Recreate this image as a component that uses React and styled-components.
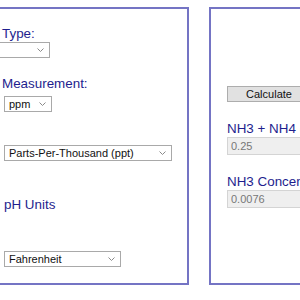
import React from 'react';
import styled, { createGlobalStyle } from 'styled-components';

const GlobalStyle = createGlobalStyle`
  html, body {
    margin: 0;
    padding: 0;
    background: #ffffff;
    overflow: hidden;
  }
  body {
    font-family: "Liberation Sans", Arial, sans-serif;
  }
`;

const Page = styled.div`
  display: flex;
  align-items: flex-start;
  gap: 20px;
  padding-top: 7px;
  margin-left: -40px;
  width: 560px;
`;

const Panel = styled.div`
  box-sizing: border-box;
  flex: 0 0 ${props => props.width}px;
  height: 278px;
  border: 2px solid #7474c4;
  padding-left: ${props => props.inset}px;
`;

const Label = styled.div`
  margin-top: ${props => props.top}px;
  margin-left: ${props => props.indent || 0}px;
  font-size: 13.4px;
  line-height: 15px;
  color: #1e1e8e;
  white-space: nowrap;
`;

const SelectWrap = styled.div`
  position: relative;
  margin-top: ${props => props.top}px;
  margin-left: ${props => props.shift || 2}px;
  width: ${props => props.width}px;
`;

const Select = styled.select`
  appearance: none;
  box-sizing: border-box;
  display: block;
  width: 100%;
  height: 16px;
  margin: 0;
  padding: 0 0 0 4px;
  border: 1px solid #a9a9a9;
  border-radius: 0;
  background: #ffffff;
  font-family: "Liberation Sans", Arial, sans-serif;
  font-size: 11px;
  color: #111111;
  outline: none;
`;

const Chevron = styled.svg`
  position: absolute;
  right: 6px;
  top: 6px;
  width: 7px;
  height: 4px;
  pointer-events: none;
`;

const Button = styled.button`
  display: block;
  box-sizing: border-box;
  margin-top: ${props => props.top}px;
  width: 84px;
  height: 16px;
  padding: 0;
  border: 1px solid #adadad;
  border-radius: 0;
  background: #e1e1e1;
  font-family: "Liberation Sans", Arial, sans-serif;
  font-size: 11px;
  color: #111111;
`;

const Output = styled.input`
  display: block;
  box-sizing: border-box;
  margin-top: ${props => props.top}px;
  width: 120px;
  height: 18px;
  padding: 0 0 0 3px;
  border: 1px solid #d4d4d4;
  background: #efefef;
  font-family: "Liberation Sans", Arial, sans-serif;
  font-size: 11px;
  color: #777777;
  outline: none;
`;

const Dropdown = ({ top, width, shift, value, options }) => (
  <SelectWrap top={top} width={width} shift={shift}>
    <Select defaultValue={value}>
      {options.map(o => <option key={o}>{o}</option>)}
    </Select>
    <Chevron viewBox="0 0 7 4">
      <path d="M0.5 0.5 L3.5 3.5 L6.5 0.5" fill="none" stroke="#8a8a8a" strokeWidth="1" />
    </Chevron>
  </SelectWrap>
);

const App = () => (
  <>
    <GlobalStyle />
    <Page>
      <Panel width={229} inset={40}>
        <Label top={17}>Type:</Label>
        <Dropdown top={1} width={68} shift={-20} value="" options={['']} />
        <Label top={18}>Measurement:</Label>
        <Dropdown top={5} width={48} value="ppm" options={['ppm', 'mg/L']} />
        <Dropdown top={33} width={168} value="Parts-Per-Thousand (ppt)" options={['Parts-Per-Thousand (ppt)', 'Specific Gravity']} />
        <Label top={36} indent={2}>pH Units</Label>
        <Dropdown top={39} width={117} value="Fahrenheit" options={['Fahrenheit', 'Celsius']} />
      </Panel>
      <Panel width={260} inset={16}>
        <Button top={77}>Calculate</Button>
        <Label top={19}>NH3 + NH4 (ppm):</Label>
        <Output top={1} readOnly value="0.25" />
        <Label top={19}>NH3 Concentration (ppm):</Label>
        <Output top={1} readOnly value="0.0076" />
      </Panel>
    </Page>
  </>
);

export default App;
